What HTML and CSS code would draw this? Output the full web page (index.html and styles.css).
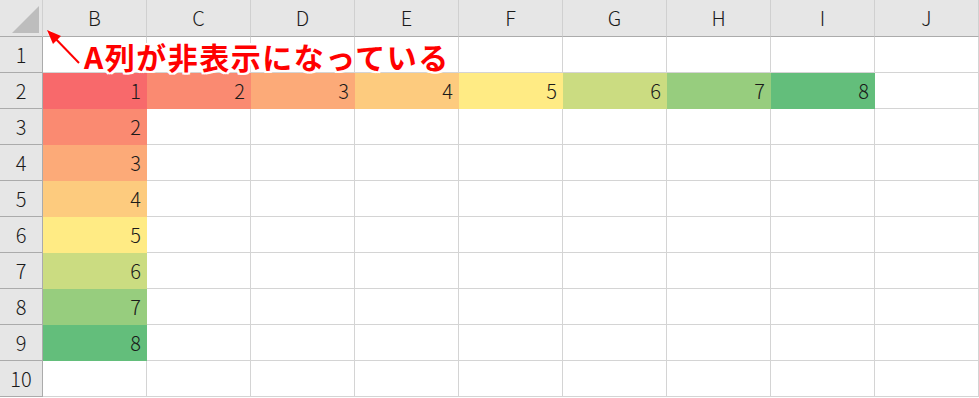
FILE: index.html
```html
<!DOCTYPE html>
<html lang="ja">
<head>
    <meta charset="UTF-8">
    <title>Sheet</title>
    <link rel="stylesheet" href="styles.css">
</head>
<body>
    <div class="sheet">
        <div class="grid">
            <div class="corner">
                <svg class="corner-mark" width="28" height="28" viewBox="0 0 28 28"><polygon points="27,0 27,27 0,27" fill="#bdbdbd"/></svg>
            </div>
            <div class="col-head">B</div>
            <div class="col-head">C</div>
            <div class="col-head">D</div>
            <div class="col-head">E</div>
            <div class="col-head">F</div>
            <div class="col-head">G</div>
            <div class="col-head">H</div>
            <div class="col-head">I</div>
            <div class="col-head">J</div>

            <div class="row-head">1</div>
            <div class="cell"></div><div class="cell"></div><div class="cell"></div><div class="cell"></div><div class="cell"></div><div class="cell"></div><div class="cell"></div><div class="cell"></div><div class="cell"></div>

            <div class="row-head">2</div>
            <div class="cell c1">1</div><div class="cell c2">2</div><div class="cell c3">3</div><div class="cell c4">4</div><div class="cell c5">5</div><div class="cell c6">6</div><div class="cell c7">7</div><div class="cell c8">8</div><div class="cell"></div>

            <div class="row-head">3</div>
            <div class="cell c2">2</div><div class="cell"></div><div class="cell"></div><div class="cell"></div><div class="cell"></div><div class="cell"></div><div class="cell"></div><div class="cell"></div><div class="cell"></div>

            <div class="row-head">4</div>
            <div class="cell c3">3</div><div class="cell"></div><div class="cell"></div><div class="cell"></div><div class="cell"></div><div class="cell"></div><div class="cell"></div><div class="cell"></div><div class="cell"></div>

            <div class="row-head">5</div>
            <div class="cell c4">4</div><div class="cell"></div><div class="cell"></div><div class="cell"></div><div class="cell"></div><div class="cell"></div><div class="cell"></div><div class="cell"></div><div class="cell"></div>

            <div class="row-head">6</div>
            <div class="cell c5">5</div><div class="cell"></div><div class="cell"></div><div class="cell"></div><div class="cell"></div><div class="cell"></div><div class="cell"></div><div class="cell"></div><div class="cell"></div>

            <div class="row-head">7</div>
            <div class="cell c6">6</div><div class="cell"></div><div class="cell"></div><div class="cell"></div><div class="cell"></div><div class="cell"></div><div class="cell"></div><div class="cell"></div><div class="cell"></div>

            <div class="row-head">8</div>
            <div class="cell c7">7</div><div class="cell"></div><div class="cell"></div><div class="cell"></div><div class="cell"></div><div class="cell"></div><div class="cell"></div><div class="cell"></div><div class="cell"></div>

            <div class="row-head">9</div>
            <div class="cell c8">8</div><div class="cell"></div><div class="cell"></div><div class="cell"></div><div class="cell"></div><div class="cell"></div><div class="cell"></div><div class="cell"></div><div class="cell"></div>

            <div class="row-head">10</div>
            <div class="cell"></div><div class="cell"></div><div class="cell"></div><div class="cell"></div><div class="cell"></div><div class="cell"></div><div class="cell"></div><div class="cell"></div><div class="cell"></div>
        </div>

        <!-- annotation -->
        <svg class="arrow" width="60" height="60" viewBox="0 0 60 60">
            <line x1="8" y1="8" x2="37" y2="38" stroke="#fff" stroke-width="5" stroke-linecap="round"/>
            <line x1="10" y1="10" x2="37" y2="38" stroke="#ff0000" stroke-width="2"/>
            <polygon points="5,5 19,11 11,19" fill="#ff0000"/>
        </svg>
        <div class="note">A列が非表示になっている</div>
    </div>
</body>
</html>
```

FILE: styles.css
```css
body {
    margin: 0;
    background: #fff;
    font-family: "Noto Sans CJK JP", "Noto Sans", sans-serif;
    color: #1a1a1a;
}
.sheet {
    position: relative;
    width: 979px;
    height: 398px;
    overflow: hidden;
}
.grid {
    display: grid;
    grid-template-columns: 43px repeat(9, 104px);
    grid-template-rows: 37px repeat(10, 36px);
}
.corner,
.col-head,
.row-head,
.cell {
    box-sizing: border-box;
    font-size: 20px;
    font-weight: 300;
    line-height: 1;
}
.corner {
    position: relative;
    background: #e6e6e6;
    border-right: 1px solid #d0d0d0;
    border-bottom: 1px solid #ababab;
}
.corner-mark {
    position: absolute;
    left: 12px;
    top: 6px;
}
.col-head {
    display: flex;
    align-items: center;
    justify-content: center;
    background: #e6e6e6;
    border-right: 1px solid #d0d0d0;
    border-bottom: 1px solid #ababab;
}
.row-head {
    display: flex;
    align-items: center;
    justify-content: center;
    background: #e6e6e6;
    border-right: 1px solid #ababab;
    border-bottom: 1px solid #ababab;
}
.cell {
    display: flex;
    align-items: center;
    justify-content: flex-end;
    padding-right: 5px;
    border-right: 1px solid #d4d4d4;
    border-bottom: 1px solid #d4d4d4;
}
.c1, .c2, .c3, .c4, .c5, .c6, .c7, .c8 {
    border-color: transparent;
}
.c1 { background: #f8696b; }
.c2 { background: #fa8a71; }
.c3 { background: #fcaa78; }
.c4 { background: #fdcb7e; }
.c5 { background: #ffeb84; }
.c6 { background: #cbdc81; }
.c7 { background: #97cd7e; }
.c8 { background: #63be7b; }

.arrow {
    position: absolute;
    left: 42px;
    top: 25px;
}
.note {
    position: absolute;
    left: 84px;
    top: 39px;
    font-size: 30px;
    font-weight: 700;
    letter-spacing: 1.5px;
    line-height: 34px;
    color: #ff0000;
    text-shadow: 2px 0 0 #fff, -2px 0 0 #fff, 0 2px 0 #fff, 0 -2px 0 #fff,
        2px 2px 0 #fff, -2px -2px 0 #fff, 2px -2px 0 #fff, -2px 2px 0 #fff;
}
```
